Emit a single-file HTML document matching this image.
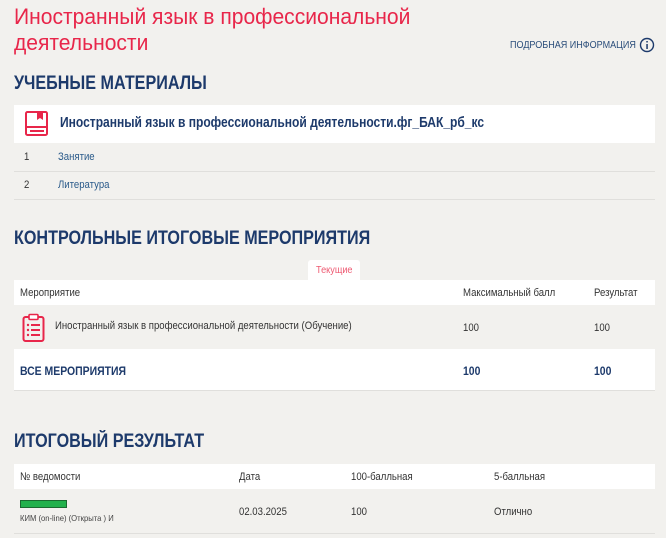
<!DOCTYPE html>
<html><head><meta charset="utf-8"><style>
body{margin:0;width:666px;height:538px;background:#f2f1ee;font-family:"Liberation Sans",sans-serif;position:relative;overflow:hidden;color:#333}
.a{position:absolute;white-space:nowrap;transform-origin:0 0}
.h{color:#1d3a6b;font-weight:bold;font-size:19px;transform:scaleX(0.85)}
.w{position:absolute;left:14px;width:641px;background:#fff}
.line{position:absolute;left:14px;width:641px;height:1px;background:#e0dfdc}
.s{font-size:11px;color:#333;transform:scaleX(0.87)}
.b{color:#1d3a6b;font-weight:bold;font-size:12px;transform:scaleX(0.87)}
</style></head><body>
<div class="a" style="left:14px;top:4px;font-size:22px;color:#e8264a;line-height:26px;transform:scaleX(0.957)">Иностранный язык в профессиональной<br>деятельности</div>
<div class="a" style="left:510px;top:39px;font-size:10.5px;color:#2a4d7a;transform:scaleX(0.86)">ПОДРОБНАЯ ИНФОРМАЦИЯ</div>
<svg class="a" style="left:639px;top:37px" width="16" height="16"><circle cx="8" cy="8" r="6.5" fill="none" stroke="#1d3a6b" stroke-width="1.4"/><rect x="7.3" y="7" width="1.5" height="5" fill="#1d3a6b"/><rect x="7.3" y="4" width="1.5" height="1.5" fill="#1d3a6b"/></svg>
<div class="a h" style="left:14px;top:73px">УЧЕБНЫЕ МАТЕРИАЛЫ</div>
<div class="w" style="top:105px;height:38px"></div>
<svg class="a" style="left:25px;top:111px" width="24" height="26"><rect x="1" y="1" width="21" height="23" rx="1.5" fill="none" stroke="#e8264a" stroke-width="2"/><path d="M1 16h21M5 20h14" stroke="#e8264a" stroke-width="2"/><path d="M12 1v8l3-2 3 2V1z" fill="#e8264a"/></svg>
<div class="a" style="left:60px;top:115px;font-size:14.5px;color:#1d3a6b;font-weight:bold;transform:scaleX(0.83)">Иностранный язык в профессиональной деятельности.фг_БАК_рб_кс</div>
<div class="a s" style="left:24px;top:151px">1</div><div class="a s" style="left:58px;top:151px;color:#2a5a8a">Занятие</div>
<div class="line" style="top:171px"></div>
<div class="a s" style="left:24px;top:179px">2</div><div class="a s" style="left:58px;top:179px;color:#2a5a8a">Литература</div>
<div class="line" style="top:199px"></div>
<div class="a h" style="left:14px;top:228px">КОНТРОЛЬНЫЕ ИТОГОВЫЕ МЕРОПРИЯТИЯ</div>
<div class="a" style="left:308px;top:260px;width:52px;height:21px;background:#fff;border-radius:3px 3px 0 0"></div>
<div class="a" style="left:316px;top:264px;font-size:10.5px;color:#ee5a72;transform:scaleX(0.87)">Текущие</div>
<div class="w" style="top:280px;height:25px"></div>
<div class="a s" style="left:20px;top:287px">Мероприятие</div>
<div class="a s" style="left:463px;top:287px">Максимальный балл</div>
<div class="a s" style="left:594px;top:287px">Результат</div>
<svg class="a" style="left:22px;top:313px" width="24" height="30"><rect x="1.5" y="4" width="20" height="24" rx="2" fill="none" stroke="#e8264a" stroke-width="2"/><rect x="7" y="1.5" width="9" height="5" rx="1" fill="#fff" stroke="#e8264a" stroke-width="1.6"/><g fill="#e8264a"><circle cx="6" cy="12" r="1.2"/><circle cx="6" cy="17" r="1.2"/><circle cx="6" cy="22" r="1.2"/><rect x="9" y="11" width="9" height="2"/><rect x="9" y="16" width="9" height="2"/><rect x="9" y="21" width="9" height="2"/></g></svg>
<div class="a s" style="left:55px;top:320px">Иностранный язык в профессиональной деятельности (Обучение)</div>
<div class="a s" style="left:463px;top:322px">100</div><div class="a s" style="left:594px;top:322px">100</div>
<div class="w" style="top:349px;height:41px"></div>
<div class="a b" style="left:20px;top:364px">ВСЕ МЕРОПРИЯТИЯ</div>
<div class="a b" style="left:463px;top:364px">100</div><div class="a b" style="left:594px;top:364px">100</div>
<div class="line" style="top:390px"></div>
<div class="a h" style="left:14px;top:431px">ИТОГОВЫЙ РЕЗУЛЬТАТ</div>
<div class="w" style="top:464px;height:25px"></div>
<div class="a s" style="left:20px;top:471px">№ ведомости</div>
<div class="a s" style="left:239px;top:471px">Дата</div>
<div class="a s" style="left:351px;top:471px">100-балльная</div>
<div class="a s" style="left:494px;top:471px">5-балльная</div>
<div class="a" style="left:20px;top:500px;width:45px;height:6px;background:#22b14c;border:1px solid #1a6a30"></div>
<div class="a" style="left:20px;top:513px;font-size:8.5px;color:#444;transform:scaleX(0.9)">КИМ (on-line) (Открыта ) И</div>
<div class="a s" style="left:239px;top:506px">02.03.2025</div>
<div class="a s" style="left:351px;top:506px">100</div>
<div class="a s" style="left:494px;top:506px">Отлично</div>
<div class="line" style="top:533px"></div>
</body></html>
